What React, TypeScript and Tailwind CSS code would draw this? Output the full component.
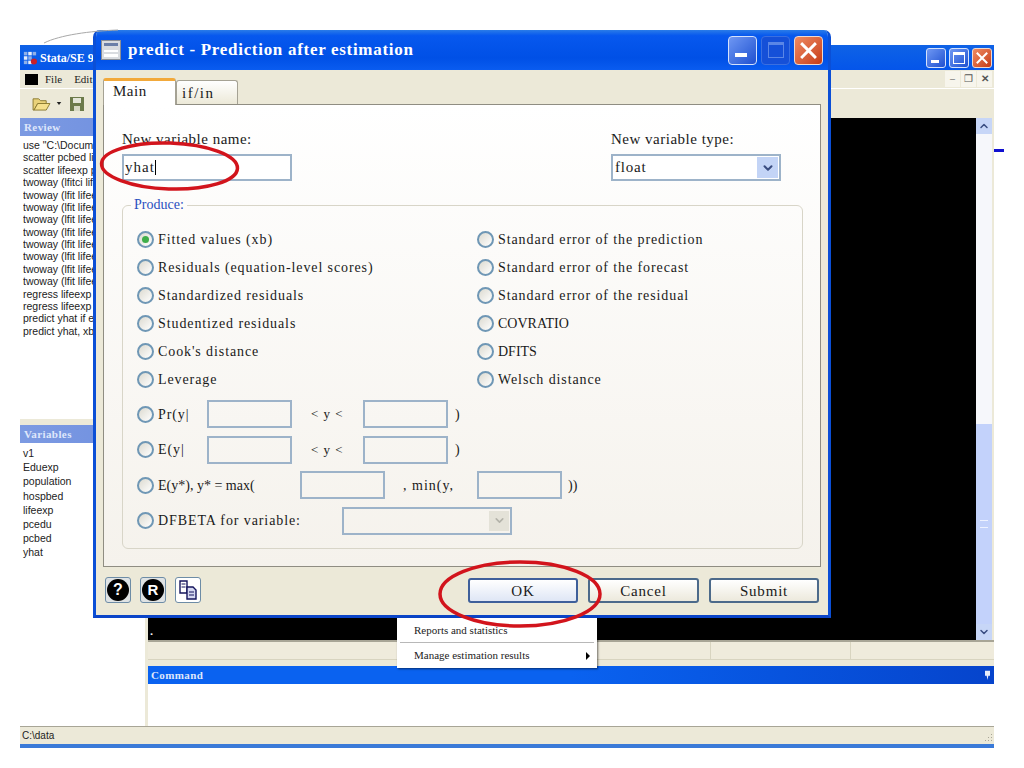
import { ChevronDown, ChevronUp } from "lucide-react";

const SERIF = "font-['Liberation_Serif','Times_New_Roman',serif]";
const SANS = "font-['Liberation_Sans',Arial,sans-serif]";

const reviewItems = [
  'use "C:\\Docum',
  "scatter pcbed lif",
  "scatter lifeexp p",
  "twoway (lfitci life",
  "twoway (lfit lifee",
  "twoway (lfit lifee",
  "twoway (lfit lifee",
  "twoway (lfit lifee",
  "twoway (lfit lifee",
  "twoway (lfit lifee",
  "twoway (lfit lifee",
  "twoway (lfit lifee",
  "regress lifeexp p",
  "regress lifeexp p",
  "predict yhat if e(",
  "predict yhat, xb",
];

const variables = ["v1", "Eduexp", "population", "hospbed", "lifeexp", "pcedu", "pcbed", "yhat"];

const leftRadios = [
  "Fitted values (xb)",
  "Residuals (equation-level scores)",
  "Standardized residuals",
  "Studentized residuals",
  "Cook's distance",
  "Leverage",
];

const rightRadios = [
  "Standard error of the prediction",
  "Standard error of the forecast",
  "Standard error of the residual",
  "COVRATIO",
  "DFITS",
  "Welsch distance",
];

function Radio({ label, checked, caps }: { label: string; checked?: boolean; caps?: boolean }) {
  return (
    <div className="flex h-full items-center gap-[4px]">
      <span className="flex h-[17px] w-[17px] shrink-0 items-center justify-center rounded-full border-2 border-[#6f97b5] bg-gradient-to-br from-[#dcdad0] to-white">
        {checked && <span className="h-[7px] w-[7px] rounded-full bg-[#3fae4a]" />}
      </span>
      <span className={`whitespace-nowrap ${caps ? "tracking-normal" : "tracking-[0.9px]"}`}>{label}</span>
    </div>
  );
}

function Box({ className }: { className: string }) {
  return <div className={`h-[28px] border-2 border-[#9db3c9] ${className}`} />;
}

function CaptionButtons({ big }: { big?: boolean }) {
  const size = big ? "h-[29px] w-[29px] rounded-[4px]" : "h-[20px] w-[20px] rounded-[3px]";
  return (
    <div className={`flex ${big ? "gap-[4px]" : "gap-[3px]"}`}>
      <div className={`${size} flex items-end justify-start border border-[#d5e2fb] bg-gradient-to-br from-[#6f97f3] to-[#1f4fd0]`}>
        <span className={big ? "mb-[7px] ml-[6px] h-[4px] w-[12px] bg-white" : "mb-[4px] ml-[4px] h-[3px] w-[8px] bg-white"} />
      </div>
      <div
        className={`${size} flex items-center justify-center border ${
          big ? "border-[#3a6fe0] bg-[#1550d8]" : "border-[#d5e2fb] bg-gradient-to-br from-[#6f97f3] to-[#1f4fd0]"
        }`}
      >
        <span
          className={
            big
              ? "h-[16px] w-[16px] border border-t-[3px] border-[#5a86e6]"
              : "h-[12px] w-[12px] border border-t-[3px] border-white"
          }
        />
      </div>
      <div className={`${size} flex items-center justify-center border border-[#efd9cf] bg-gradient-to-br from-[#ee8a62] to-[#c63a12]`}>
        <svg viewBox="0 0 12 12" className={big ? "h-[17px] w-[17px]" : "h-[12px] w-[12px]"}>
          <path d="M1.5 1.5 L10.5 10.5 M10.5 1.5 L1.5 10.5" stroke="white" strokeWidth="2" strokeLinecap="square" />
        </svg>
      </div>
    </div>
  );
}

function PaneHeader({ title }: { title: string }) {
  return (
    <div className={`h-[18px] shrink-0 bg-gradient-to-r from-[#7c9ae2] to-[#6f8fe0] px-[4px] text-[11px] font-bold leading-[18px] tracking-[0.4px] text-[#dfe7fb] ${SERIF}`}>
      {title}
    </div>
  );
}

function SquareIcon({ children }: { children: React.ReactNode }) {
  return (
    <div className="flex h-[26px] w-[26px] items-center justify-center rounded-[3px] border border-[#6d8ca6] bg-[#dfe3e4]">
      {children}
    </div>
  );
}

function MainWindow() {
  return (
    <div className="absolute left-[20px] top-[45px] flex h-[703px] w-[974px] flex-col bg-[#ece9d8]">
      <div className="flex h-[25px] shrink-0 items-center justify-between bg-gradient-to-b from-[#0f62e6] to-[#0555ea] pl-[3px] pr-[2px]">
        <div className="flex items-center gap-[3px]">
          <svg viewBox="0 0 16 16" className="h-[14px] w-[14px]">
            <rect x="1" y="1" width="4" height="4" fill="#8fb0e8" />
            <rect x="6" y="1" width="4" height="4" fill="#e8eefb" />
            <rect x="11" y="1" width="4" height="4" fill="#8fb0e8" />
            <rect x="1" y="6" width="4" height="4" fill="#e8eefb" />
            <rect x="6" y="6" width="4" height="4" fill="#8fb0e8" />
            <rect x="1" y="11" width="4" height="4" fill="#8fb0e8" />
            <rect x="6" y="11" width="4" height="4" fill="#e8eefb" />
            <circle cx="12.5" cy="12" r="3.5" fill="#c8202a" />
          </svg>
          <span className={`whitespace-nowrap text-[12px] font-bold text-white ${SERIF}`}>Stata/SE 9</span>
        </div>
        <CaptionButtons />
      </div>

      <div className={`flex h-[18px] shrink-0 items-center justify-between pl-[5px] pr-[2px] text-[11px] text-[#222] ${SERIF}`}>
        <div className="flex items-center">
          <div className="h-[11px] w-[13px] bg-black" />
          <span className="ml-[7px]">File</span>
          <span className="ml-[12px]">Edit</span>
        </div>
        <div className="flex gap-[1px] text-[#555]">
          <span className="h-[16px] w-[15px] bg-[#f7f5ec] text-center text-[10px] leading-[16px]">–</span>
          <span className="h-[16px] w-[15px] bg-[#f7f5ec] text-center text-[10px] leading-[16px]">❐</span>
          <span className="h-[16px] w-[15px] bg-[#f7f5ec] text-center text-[10px] font-bold leading-[16px]">✕</span>
        </div>
      </div>

      <div className="flex h-[30px] shrink-0 items-center border-t border-white pl-[12px]">
        <svg viewBox="0 0 20 16" className="h-[15px] w-[19px]">
          <path d="M1 3 H7 L9 5 H15 V8 H6 L2 15 H1 Z" fill="#e9d27a" stroke="#8a7a30" />
          <path d="M6 8 H19 L15 15 H2 Z" fill="#f5e08c" stroke="#8a7a30" />
        </svg>
        <svg viewBox="0 0 6 4" className="ml-[5px] h-[3px] w-[6px]">
          <path d="M0 0 H6 L3 4 Z" fill="#222" />
        </svg>
        <svg viewBox="0 0 14 14" className="ml-[8px] h-[14px] w-[14px]">
          <rect width="14" height="14" fill="#6c7a4a" />
          <rect x="3" y="1" width="8" height="5" fill="#e4e6d8" />
          <rect x="4" y="9" width="6" height="5" fill="#d7d9c4" />
        </svg>
      </div>

      <div className="flex min-h-0 flex-1">
        <div className={`flex w-[125px] shrink-0 flex-col bg-white ${SANS}`}>
          <PaneHeader title="Review" />
          <ul className="h-[283px] shrink-0 pl-[3px] pt-[3px] text-[10.5px] leading-[12.37px] text-[#222]">
            {reviewItems.map((item, i) => (
              <li key={i} className="overflow-hidden whitespace-nowrap">
                {item}
              </li>
            ))}
          </ul>
          <div className="h-[6px] shrink-0 bg-[#ece9d8]" />
          <PaneHeader title="Variables" />
          <ul className="pl-[3px] pt-[3px] text-[10.5px] leading-[14.2px] text-[#222]">
            {variables.map((v) => (
              <li key={v}>{v}</li>
            ))}
          </ul>
        </div>

        <div className="flex min-w-0 flex-1 flex-col border-l-[3px] border-[#ece9d8]">
          <div className="flex h-[524px] shrink-0 border-b-2 border-[#a8a596]">
            <div className="flex flex-1 items-end bg-black pb-[3px] pl-[2px] text-[11px] font-bold leading-[12px] text-white">.</div>
            <div className="flex w-[18px] shrink-0 flex-col border-r-2 border-[#ece9d8] bg-[#f6f7fb]">
              <div className="flex h-[16px] items-center justify-center bg-[#c7d6f7]">
                <ChevronUp size={12} strokeWidth={3} className="text-[#3a4d80]" />
              </div>
              <div className="flex-1" />
              <div className="flex h-[200px] items-center justify-center bg-[#c3d2fb]">
                <span className="h-[8px] w-[8px] border-y border-[#eef2ff]" />
              </div>
              <div className="flex h-[16px] items-center justify-center bg-[#c7d6f7]">
                <ChevronDown size={12} strokeWidth={3} className="text-[#3a4d80]" />
              </div>
            </div>
          </div>
          <div className="flex h-[18px] shrink-0 border-b border-[#d8d4c0] bg-[#efebdc] pr-[2px]">
            <div className="w-[563px] border-r border-[#d8d4c0]" />
            <div className="w-[140px] border-r border-[#d8d4c0]" />
          </div>
          <div className="h-[6px] shrink-0" />
          <div className={`flex h-[18px] shrink-0 items-center justify-between bg-gradient-to-r from-[#0a62f0] via-[#0a62f0] to-[#0644cc] px-[3px] text-[11px] font-bold tracking-[0.4px] text-[#dfe7fb] ${SERIF}`}>
            <span>Command</span>
            <svg viewBox="0 0 8 12" className="h-[10px] w-[7px]">
              <path d="M1 1 H7 V7 H5 L4 12 L3 7 H1 Z" fill="#e8eefb" />
            </svg>
          </div>
          <div className="flex-1 bg-white" />
        </div>
      </div>

      <div className={`relative flex h-[18px] shrink-0 items-center border-t border-[#a8a596] pl-[2px] text-[10px] text-[#222] ${SANS}`}>
        C:\data
        <svg viewBox="0 0 10 10" className="absolute bottom-[1px] right-[1px] h-[10px] w-[10px]">
          <path d="M8 1 h1 v1 h-1z M5 4 h1 v1 h-1z M8 4 h1 v1 h-1z M2 7 h1 v1 h-1z M5 7 h1 v1 h-1z M8 7 h1 v1 h-1z" fill="#a8a596" />
        </svg>
      </div>
      <div className="h-[4px] shrink-0 bg-[#3a7ad8]" />
    </div>
  );
}

function Dialog() {
  return (
    <div className={`absolute left-[93px] top-[30px] flex h-[588px] w-[738px] flex-col overflow-hidden rounded-t-[7px] border-x-[3px] border-b-[3px] border-x-[#0b4fd6] border-b-[#0b45c8] bg-[#ece9d8] text-[14px] text-[#1a1a1a] ${SERIF}`}>
      <div className="flex h-[40px] shrink-0 items-center justify-between bg-[linear-gradient(180deg,#2a7ce8_0%,#0758ee_14%,#0050e6_70%,#0a5cf0_100%)] px-[5px]">
        <div className="flex items-center gap-[7px]">
          <div className="flex h-[20px] w-[20px] flex-col gap-[2px] border border-[#8b8f96] bg-[#d9dce0] p-[2px]">
            <div className="h-[3px] bg-[#6b7fa8]" />
            <div className="mt-[2px] h-[3px] bg-white" />
            <div className="h-[3px] bg-white" />
          </div>
          <span className="whitespace-nowrap text-[17px] font-bold tracking-[0.7px] text-white">predict - Prediction after estimation</span>
        </div>
        <CaptionButtons big />
      </div>

      <div className="flex min-h-0 flex-1 flex-col px-[7px]">
        <div className="flex h-[34px] shrink-0 items-end">
          <div className="relative z-10 -mb-[1px] h-[27px] w-[73px] rounded-t-[3px] border-x border-t-[3px] border-[#a5a294] border-t-[#f2a93b] bg-white pl-[9px] pt-[1px] text-[15px] leading-[18px] tracking-[0.5px]">
            Main
          </div>
          <div className="h-[24px] w-[62px] rounded-t-[3px] border-x border-t border-[#a5a294] bg-gradient-to-b from-white to-[#ece9d8] pl-[5px] pt-[3px] text-[15px] leading-[18px] tracking-[1.5px]">
            if/in
          </div>
        </div>

        <div className="h-[463px] shrink-0 border border-[#8f8d82] bg-gradient-to-b from-white to-[#f5f2ec] pl-[18px] pr-[14px]">
          <div className="flex pt-[25px]">
            <div className="w-[489px]">
              <div className="h-[18px] text-[15px] leading-[18px] tracking-[0.5px]">New variable name:</div>
              <div className="mt-[6px] flex h-[27px] w-[170px] items-center border-2 border-[#9db3c9] bg-white pl-[1px] text-[15px] tracking-[1px]">
                yhat<span className="h-[15px] w-px bg-black" />
              </div>
            </div>
            <div>
              <div className="h-[18px] text-[15px] leading-[18px] tracking-[0.5px]">New variable type:</div>
              <div className="mt-[6px] flex h-[27px] w-[170px] items-center justify-between border-2 border-[#9db3c9] bg-white pl-[2px] pr-[1px] text-[15px] tracking-[0.8px]">
                float
                <span className="flex h-[21px] w-[21px] items-center justify-center bg-[#c3d4f6]">
                  <ChevronDown size={14} strokeWidth={3.5} className="text-[#3a4d80]" />
                </span>
              </div>
            </div>
          </div>

          <div className="relative mt-[24px] h-[344px] w-[681px] rounded-[6px] border border-[#d8d5c8] pl-[14px] pt-[19px]">
            <span className="absolute -top-[10px] left-[8px] bg-[#fdfcfa] px-[3px] text-[14px] leading-[18px] text-[#2a4fc0]">Produce:</span>
            <div className="grid h-[168px] grid-cols-[340px_1fr] grid-rows-6">
              {leftRadios.map((label, i) => (
                <div key={label} className="contents">
                  <Radio label={label} checked={i === 0} />
                  <Radio label={rightRadios[i]} caps={i === 3 || i === 4} />
                </div>
              ))}
            </div>
            <div className="mt-[3px] flex flex-col">
              <div className="flex h-[36px] items-center">
                <div className="w-[70px]"><Radio label="Pr(y|" /></div>
                <Box className="w-[85px]" />
                <span className="w-[71px] pl-[19px] text-[13px] tracking-[1px]">&lt; y &lt;</span>
                <Box className="w-[85px]" />
                <span className="pl-[7px]">)</span>
              </div>
              <div className="flex h-[35px] items-center">
                <div className="w-[70px]"><Radio label="E(y|" /></div>
                <Box className="w-[85px]" />
                <span className="w-[71px] pl-[19px] text-[13px] tracking-[1px]">&lt; y &lt;</span>
                <Box className="w-[85px]" />
                <span className="pl-[7px]">)</span>
              </div>
              <div className="flex h-[36px] items-center">
                <div className="w-[163px]"><Radio label="E(y*), y* = max(" caps /></div>
                <Box className="w-[85px]" />
                <span className="w-[92px] pl-[18px] tracking-[1px]">, min(y,</span>
                <Box className="w-[85px]" />
                <span className="pl-[6px]">))</span>
              </div>
              <div className="flex h-[35px] items-center">
                <div className="w-[205px]"><Radio label="DFBETA for variable:" /></div>
                <div className="flex h-[28px] w-[170px] items-center justify-end border-2 border-[#9db3c9] pr-[1px]">
                  <span className="flex h-[20px] w-[20px] items-center justify-center bg-[#e4e2d8]">
                    <ChevronDown size={13} strokeWidth={3} className="text-[#b4b3aa]" />
                  </span>
                </div>
              </div>
            </div>
          </div>
        </div>

        <div className="mt-[10px] flex h-[26px] shrink-0 items-center justify-between pl-[2px] pr-[2px]">
          <div className="flex gap-[9px]">
            <SquareIcon>
              <span className={`flex h-[22px] w-[22px] items-center justify-center rounded-full bg-black text-[16px] font-bold text-white ${SANS}`}>?</span>
            </SquareIcon>
            <SquareIcon>
              <span className={`flex h-[22px] w-[22px] items-center justify-center rounded-full bg-black text-[15px] font-bold text-white ${SANS}`}>R</span>
            </SquareIcon>
            <div className="flex h-[26px] w-[26px] items-center justify-center rounded-[3px] border border-[#6d8ca6] bg-white">
              <svg viewBox="0 0 20 20" className="h-[20px] w-[20px]">
                <path d="M2 1 H9 V13 H2 Z" fill="white" stroke="#14145c" strokeWidth="1.4" />
                <path d="M3.5 4 H7.5 M3.5 7 H7.5" stroke="#14145c" />
                <path d="M9 7 H15 L18 10 V19 H9 Z" fill="#d5d8f0" stroke="#14145c" strokeWidth="1.4" />
                <path d="M11 12 H16 M11 15 H16" stroke="#14145c" />
              </svg>
            </div>
          </div>
          <div className="flex gap-[10px] text-[15px] tracking-[0.8px]">
            <button className="h-[25px] w-[110px] rounded-[3px] border-2 border-[#3e5f9a] bg-gradient-to-b from-white to-[#dfe6f5]">OK</button>
            <button className="h-[25px] w-[111px] rounded-[3px] border-2 border-[#4c6a8a] bg-gradient-to-b from-white to-[#ece9dc]">Cancel</button>
            <button className="h-[25px] w-[110px] rounded-[3px] border-2 border-[#4c6a8a] bg-gradient-to-b from-white to-[#ece9dc]">Submit</button>
          </div>
        </div>
      </div>
    </div>
  );
}

function ContextMenu() {
  return (
    <div className={`absolute left-[397px] top-[618px] w-[200px] bg-white px-[3px] text-[11px] text-[#222] shadow-[1px_1px_2px_rgba(0,0,0,0.55)] ${SERIF}`}>
      <div className="flex h-[24px] items-center pl-[14px]">Reports and statistics</div>
      <div className="h-px bg-[#b8b8b8]" />
      <div className="flex h-[25px] items-center justify-between pl-[14px] pr-[4px]">
        Manage estimation results
        <span className="h-0 w-0 border-y-[4px] border-l-[4px] border-y-transparent border-l-black" />
      </div>
    </div>
  );
}

export default function App() {
  return (
    <div className="relative h-[768px] w-[1024px] overflow-hidden bg-white">
      <MainWindow />
      <div className="absolute left-[994px] top-[149px] h-[3px] w-[10px] bg-[#1010d0]" />
      <Dialog />
      <ContextMenu />
      <svg viewBox="0 0 1024 768" className="pointer-events-none absolute left-0 top-0 h-[768px] w-[1024px]">
        <path d="M44 43 C60 35 90 31 118 30" fill="none" stroke="#a8a8a8" />
        <ellipse cx="169.5" cy="166" rx="68" ry="23" fill="none" stroke="#d2141c" strokeWidth="3.5" transform="rotate(2 169.5 166)" />
        <ellipse cx="520" cy="594" rx="80" ry="32" fill="none" stroke="#d2141c" strokeWidth="3.5" />
      </svg>
    </div>
  );
}
